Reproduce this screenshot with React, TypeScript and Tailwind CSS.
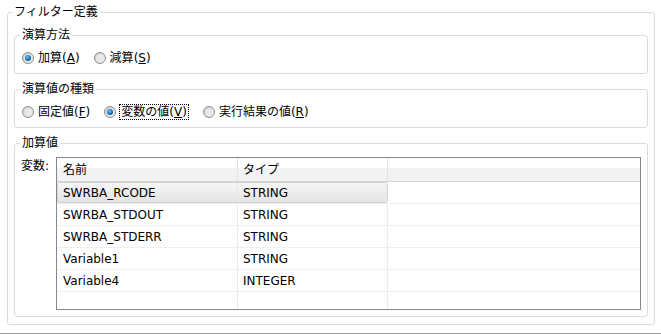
import { useId } from "react";

const font = "font-['DejaVu_Sans','Noto_Sans_CJK_JP',sans-serif]";

function Radio({ checked }: { checked: boolean }) {
  const id = useId().replace(/:/g, "");
  return (
    <svg width="12" height="12" viewBox="0 0 12 12" className="shrink-0">
      <defs>
        <linearGradient id={`o${id}`} x1="0" y1="0" x2="1" y2="1">
          <stop offset="0" stopColor="#c9c9c9" />
          <stop offset="1" stopColor="#f6f6f6" />
        </linearGradient>
        <radialGradient id={`d${id}`} cx="0.4" cy="0.35" r="0.7">
          <stop offset="0" stopColor="#6cc1f2" />
          <stop offset="0.6" stopColor="#1f7cc4" />
          <stop offset="1" stopColor="#0c467f" />
        </radialGradient>
      </defs>
      <circle cx="6" cy="6" r="5.5" fill={`url(#o${id})`} stroke="#8c8f91" strokeWidth="1" />
      <circle cx="6" cy="6" r="3.6" fill="#e9e9e9" />
      {checked && <circle cx="6" cy="6" r="3" fill={`url(#d${id})`} />}
    </svg>
  );
}

function Option({ checked, focused, label, k }: { checked: boolean; focused?: boolean; label: string; k: string }) {
  return (
    <div className="flex items-center gap-[4px]">
      <Radio checked={checked} />
      <span
        className={
          focused
            ? "-ml-[1px] border border-dotted border-black px-[1px] leading-[14px]"
            : "leading-[16px]"
        }
      >
        {label}(<u>{k}</u>)
      </span>
    </div>
  );
}

const rows = [
  ["SWRBA_RCODE", "STRING"],
  ["SWRBA_STDOUT", "STRING"],
  ["SWRBA_STDERR", "STRING"],
  ["Variable1", "STRING"],
  ["Variable4", "INTEGER"],
];

function VarTable() {
  return (
    <div className="h-[153px] w-[585px] overflow-hidden border border-[#828790] bg-white text-[12px]">
      <div className="flex h-[24px] border-b border-[#d5d5d5] bg-[linear-gradient(#ffffff_0%,#ffffff_40%,#f3f3f4_45%,#f1f2f3_100%)]">
        <div className="flex w-[181px] items-center border-r border-[#e3e3e3] pl-[6px]">名前</div>
        <div className="flex w-[150px] items-center border-r border-[#e3e3e3] pl-[5px]">タイプ</div>
        <div className="flex-1" />
      </div>
      {rows.map(([name, type], i) => (
        <div key={name} className="flex h-[22px] border-b border-[#efefef]">
          <div
            className={
              i === 0
                ? "flex w-[331px] rounded-[2px] border border-[#d4d4d4] bg-[linear-gradient(#f6f6f6,#e4e4e4)]"
                : "flex w-[331px]"
            }
          >
            <div
              className={
                i === 0
                  ? "flex w-[180px] items-center border-r border-[#e8e8e8] pl-[5px]"
                  : "flex w-[181px] items-center border-r border-[#e6ebf1] pl-[6px]"
              }
            >
              {name}
            </div>
            <div className="flex flex-1 items-center border-r border-[#e6ebf1] pl-[5px]">{type}</div>
          </div>
          <div className="flex-1" />
        </div>
      ))}
      <div className="flex h-[40px]">
        <div className="w-[181px] border-r border-[#e6ebf1]" />
        <div className="w-[150px] border-r border-[#e6ebf1]" />
        <div className="flex-1" />
      </div>
    </div>
  );
}

export default function App() {
  return (
    <div className={`h-[334px] w-[661px] overflow-hidden bg-white pt-[4px] text-[12px] text-black ${font}`}>
      <fieldset className="ml-[7px] mr-[6px] rounded-[3px] border border-[#d9dcde] px-[6px] pb-[7px] pt-[7px]">
        <legend className="-ml-[2px] px-[2px] leading-[16px]">フィルター定義</legend>
        <div className="flex flex-col gap-[7px]">
          <fieldset className="rounded-[3px] border border-[#d9dcde] pb-[7px] pl-[7px] pt-[7px]">
            <legend className="-ml-[2px] px-[2px] leading-[16px]">演算方法</legend>
            <div className="flex h-[16px] items-center gap-[14px]">
              <Option checked label="加算" k="A" />
              <Option checked={false} label="減算" k="S" />
            </div>
          </fieldset>
          <fieldset className="rounded-[3px] border border-[#d9dcde] pb-[7px] pl-[7px] pt-[7px]">
            <legend className="-ml-[2px] px-[2px] leading-[16px]">演算値の種類</legend>
            <div className="flex h-[16px] items-center gap-[14px]">
              <Option checked={false} label="固定値" k="F" />
              <Option checked focused label="変数の値" k="V" />
              <Option checked={false} label="実行結果の値" k="R" />
            </div>
          </fieldset>
          <fieldset className="rounded-[3px] border border-[#d9dcde] pb-[6px] pl-[6px] pr-[6px] pt-[6px]">
            <legend className="-ml-[1px] px-[2px] leading-[16px]">加算値</legend>
            <div className="flex">
              <div className="w-[35px] pt-[1px] leading-[16px]">変数:</div>
              <VarTable />
            </div>
          </fieldset>
        </div>
      </fieldset>
      <div className="mt-[8px] border-t border-[#a0a0a0]" />
    </div>
  );
}
